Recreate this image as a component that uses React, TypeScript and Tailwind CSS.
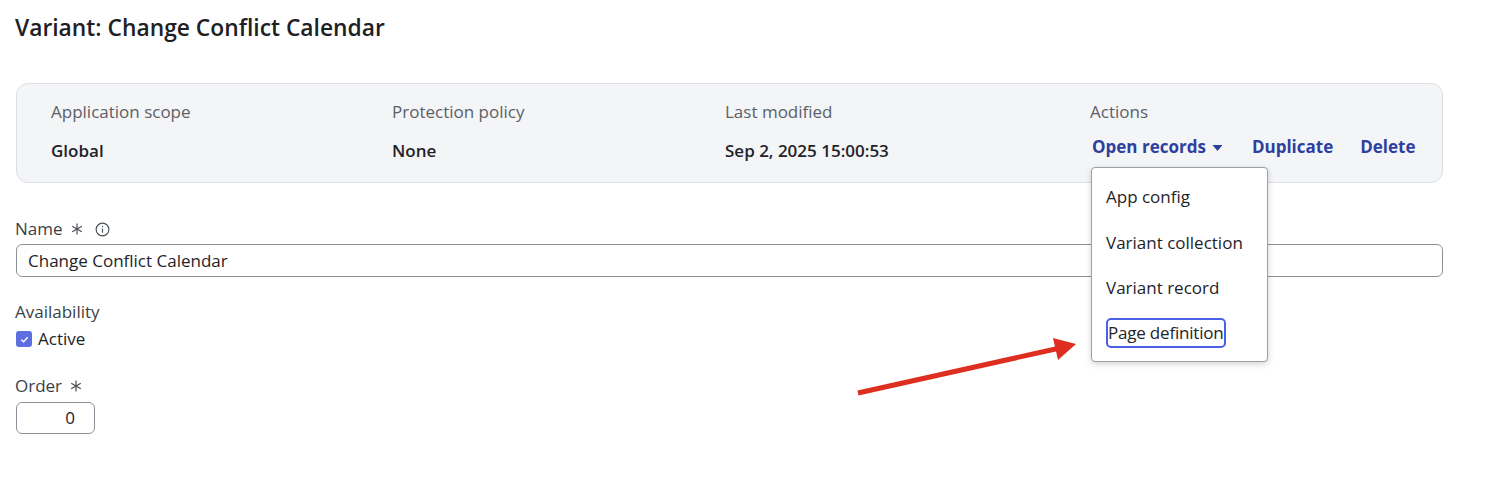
import React from "react";

const font = { fontFamily: '"Open Sans", "Noto Sans", sans-serif' };

function Asterisk({ className = "" }: { className?: string }) {
  return (
    <svg viewBox="0 0 12 12" className={className} fill="none" stroke="currentColor" strokeWidth={1.2}>
      <line x1="6" y1="0.5" x2="6" y2="11.5" />
      <line x1="1.2" y1="3.2" x2="10.8" y2="8.8" />
      <line x1="1.2" y1="8.8" x2="10.8" y2="3.2" />
    </svg>
  );
}

function InfoIcon() {
  return (
    <svg viewBox="0 0 16 16" className="h-[15px] w-[15px]" fill="none" stroke="currentColor" strokeWidth={1.2}>
      <circle cx="8" cy="8" r="6.8" />
      <line x1="8" y1="7" x2="8" y2="11.5" />
      <circle cx="8" cy="4.8" r="0.7" fill="currentColor" stroke="none" />
    </svg>
  );
}

function Meta({ label, value }: { label: string; value: string }) {
  return (
    <div className="flex flex-col gap-[15px]">
      <span className="text-[17px] leading-6 text-[#5b6067]">{label}</span>
      <span className="text-[17px] font-semibold leading-6 text-[#1f2328]">{value}</span>
    </div>
  );
}

const menuItems = ["App config", "Variant collection", "Variant record", "Page definition"];

export default function App() {
  return (
    <div style={font} className="relative h-[492px] w-[1498px] overflow-hidden bg-white px-[15px] text-[#1f2328]">
      <h1 className="mt-[14px] text-[22.8px] font-semibold leading-7 text-[#1d2125]">
        Variant: Change Conflict Calendar
      </h1>

      {/* summary card */}
      <div className="ml-px mt-[41px] grid h-[100px] w-[1427px] grid-cols-[341px_333px_365px_1fr] rounded-[12px] border border-[#dcdfe3] bg-[#f4f5f7] pl-[34px] pt-[16px]">
        <Meta label="Application scope" value="Global" />
        <Meta label="Protection policy" value="None" />
        <Meta label="Last modified" value="Sep 2, 2025 15:00:53" />
        <div className="flex flex-col gap-[11px]">
          <span className="text-[17px] leading-6 text-[#5b6067]">Actions</span>
          <div className="flex items-center text-[17px] font-bold leading-6 text-[#2e3f9e]">
            <span className="ml-[2px]">Open records</span>
            <svg viewBox="0 0 10 6" className="ml-[6px] mt-[2px] h-[6px] w-[11px]" fill="currentColor">
              <path d="M0 0 L10 0 L5 6 Z" />
            </svg>
            <span className="ml-[29px]">Duplicate</span>
            <span className="ml-[27px]">Delete</span>
          </div>
        </div>
      </div>

      {/* form */}
      <div className="mt-[34px] flex items-center text-[17px] leading-6 text-[#3a3f45]">
        <span>Name</span>
        <Asterisk className="ml-[8px] h-[12px] w-[12px] text-[#4a4f55]" />
        <span className="ml-[12px] text-[#4a4f55]">
          <InfoIcon />
        </span>
      </div>
      <div className="ml-px mt-[3px] flex h-[33px] w-[1427px] items-center rounded-[6px] border border-[#8d929a] pl-[11px] text-[17px] text-[#1f2328]">
        Change Conflict Calendar
      </div>

      <div className="mt-[23px] text-[17px] leading-6 text-[#3a3f45]">Availability</div>
      <div className="mt-[3px] flex items-center text-[17px] leading-6 text-[#1f2328]">
        <span className="ml-px flex h-[16px] w-[16px] items-center justify-center rounded-[3px] bg-[#5c6ee0]">
          <svg viewBox="0 0 12 12" className="h-[11px] w-[11px]" fill="none" stroke="white" strokeWidth={1.5}>
            <path d="M2.5 6.2 L5 8.5 L9.5 3.5" />
          </svg>
        </span>
        <span className="ml-[6px]">Active</span>
      </div>

      <div className="mt-[23px] flex items-center text-[17px] leading-6 text-[#3a3f45]">
        <span>Order</span>
        <Asterisk className="ml-[8px] h-[12px] w-[12px] text-[#4a4f55]" />
      </div>
      <div className="ml-px mt-[4px] flex h-[32px] w-[79px] items-center justify-end rounded-[6px] border border-[#8d929a] pr-[19px] text-[17px] text-[#1f2328]">
        0
      </div>

      {/* open records menu */}
      <div className="absolute left-[1091px] top-[167px] flex h-[195px] w-[177px] flex-col gap-[21.5px] rounded-[4px] border border-[#9aa0a6] bg-white pl-[14px] pt-[17px] shadow-[0_2px_6px_rgba(0,0,0,0.18)]">
        {menuItems.map((item, i) =>
          i === menuItems.length - 1 ? (
            <span
              key={item}
              className="-mt-[4px] w-fit rounded-[5px] border-2 border-[#4a60e6] py-[1px] text-[17px] leading-6 tracking-[-0.2px] text-[#1f2328]"
            >
              {item}
            </span>
          ) : (
            <span key={item} className="text-[17px] leading-6 text-[#1f2328]">
              {item}
            </span>
          )
        )}
      </div>

      {/* annotation arrow */}
      <svg className="absolute left-0 top-0" width="1498" height="492" viewBox="0 0 1498 492">
        <line x1="858" y1="393" x2="1060" y2="348" stroke="#dd2e20" strokeWidth="5" />
        <path d="M1053 338 L1076 344 L1058 360 Z" fill="#dd2e20" />
      </svg>
    </div>
  );
}
